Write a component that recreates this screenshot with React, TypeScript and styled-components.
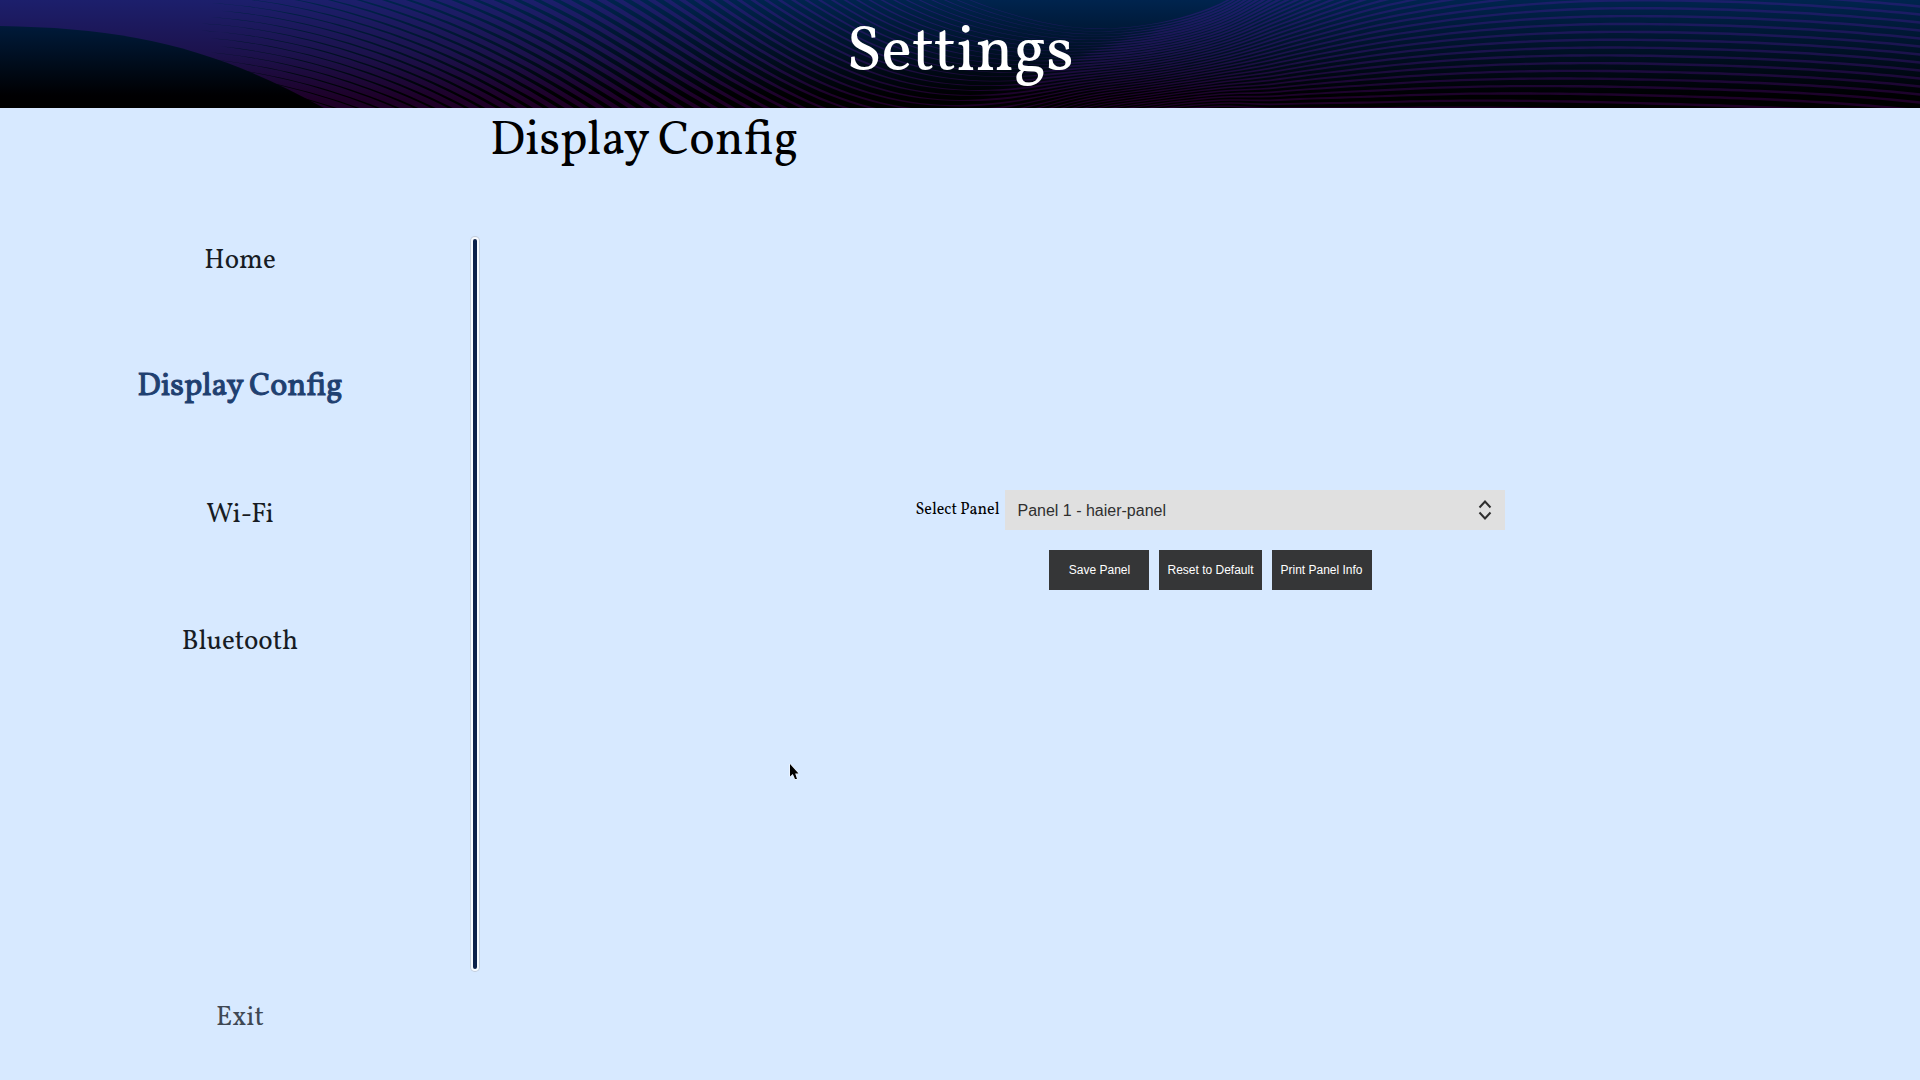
import React, { useState } from "react";
import styled, { createGlobalStyle } from "styled-components";

const serif = `Vollkorn, "Liberation Serif", serif`;
const sans = `"Liberation Sans", Arial, sans-serif`;

const GlobalStyle = createGlobalStyle`
  *, *::before, *::after { box-sizing: border-box; }
  body {
    margin: 0;
    background: #d7e9ff;
    color: #000;
    font-family: ${serif};
  }
`;

/* ---------- header wave artwork ---------- */

type Table = [number, number][];

const slopes: Table = [
  [200, 0.08], [300, 0.24], [400, 0.38], [500, 0.5], [640, 0.62], [750, 0.6],
  [850, 0.46], [950, 0.22], [1040, 0.04], [1100, -0.06], [1180, -0.2],
  [1250, -0.27], [1320, -0.2], [1420, -0.1], [1600, 0], [1750, 0.04], [1920, 0.1],
];
const spacings: Table = [
  [200, 7], [400, 8], [640, 10], [800, 8.5], [900, 6.5], [1000, 4.4],
  [1080, 2.9], [1150, 2.6], [1220, 3], [1280, 4.2], [1400, 6.2], [1600, 7.8], [1920, 8],
];
const fills: Table = [
  [200, 1], [300, 0.88], [400, 0.76], [640, 0.5], [800, 0.32], [950, 0.2],
  [1020, 0.2], [1120, 0.42], [1200, 0.5], [1280, 0.42], [1400, 0.35], [1600, 0.31], [1920, 0.31],
];

function sample(table: Table, x: number) {
  const last = table.length - 1;
  if (x <= table[0][0]) return table[0][1];
  if (x >= table[last][0]) return table[last][1];
  let i = 0;
  while (table[i + 1][0] < x) i += 1;
  const slopeAt = (j: number) => {
    const a = table[Math.max(0, j - 1)];
    const b = table[Math.min(last, j + 1)];
    return (b[1] - a[1]) / (b[0] - a[0]);
  };
  const [x0, y0] = table[i];
  const [x1, y1] = table[i + 1];
  const w = x1 - x0;
  const t = (x - x0) / w;
  const t2 = t * t;
  const t3 = t2 * t;
  return (
    (2 * t3 - 3 * t2 + 1) * y0 +
    (t3 - 2 * t2 + t) * w * slopeAt(i) +
    (3 * t2 - 2 * t3) * y1 +
    (t3 - t2) * w * slopeAt(i + 1)
  );
}

// Share of the gap that a wave line fills: the lines swell below the crest
// that climbs to the top edge, and thin out above it.
function fillAt(x: number, y: number) {
  const base = sample(fills, x);
  if (x <= 900) return base;
  const weight = Math.min(1, (x - 900) / 100);
  const depth = y - (60 - (x - 1080) * 0.4);
  const below = 1 / (1 + Math.exp(-depth / 4));
  const swell = 0.5 * Math.exp(-Math.max(0, depth) / 18);
  const shaped = below * (base + swell) + (1 - below) * 0.12;
  return Math.min(1, base + (shaped - base) * weight);
}

const STEP = 10;
const xs = Array.from({ length: 173 }, (_, i) => 200 + i * STEP);
const pivot = xs.indexOf(1080);

// Index of the wave line that crosses the middle of the band at each x.
const phase: number[] = [];
phase[pivot] = 9;
for (let i = pivot + 1; i < xs.length; i += 1) {
  const x = xs[i] - STEP / 2;
  phase[i] = phase[i - 1] - (sample(slopes, x) / sample(spacings, x)) * STEP;
}
for (let i = pivot - 1; i >= 0; i -= 1) {
  const x = xs[i] + STEP / 2;
  phase[i] = phase[i + 1] + (sample(slopes, x) / sample(spacings, x)) * STEP;
}

function ribbon(k: number) {
  const upper: string[] = [];
  const lower: string[] = [];
  xs.forEach((x, i) => {
    const gap = sample(spacings, x);
    const y = 54 + (k - phase[i]) * gap;
    const h = (fillAt(x, y) * gap) / 2;
    upper.push(`${x} ${(y - h).toFixed(2)}`);
    lower.unshift(`${x} ${(y + h).toFixed(2)}`);
  });
  return `M${upper.join("L")}L${lower.join("L")}Z`;
}

const ribbons = Array.from({ length: 90 }, (_, k) => ribbon(k)).join("");

const Artwork = styled.svg`
  position: absolute;
  inset: 0;
  width: 100%;
  height: 100%;
`;

function HeaderArtwork() {
  return (
    <Artwork viewBox="0 0 1920 108" preserveAspectRatio="none" aria-hidden="true">
      <defs>
        <linearGradient id="violet" gradientUnits="userSpaceOnUse" x1="0" y1="0" x2="0" y2="108">
          <stop offset="0" stopColor="#1c1f6c" />
          <stop offset="0.5" stopColor="#1c124c" />
          <stop offset="0.92" stopColor="#1e0028" />
          <stop offset="1" stopColor="#1e0026" />
        </linearGradient>
        <linearGradient id="navy" gradientUnits="userSpaceOnUse" x1="0" y1="0" x2="0" y2="108">
          <stop offset="0" stopColor="#00244e" />
          <stop offset="0.45" stopColor="#001228" />
          <stop offset="0.88" stopColor="#000002" />
          <stop offset="1" stopColor="#000000" />
        </linearGradient>
      </defs>
      <rect width="1920" height="108" fill="url(#navy)" />
      <rect width="201" height="108" fill="url(#violet)" />
      <path d={ribbons} fill="url(#violet)" />
      <path d="M0 26C130 28 215 48 324 108H0Z" fill="url(#navy)" />
    </Artwork>
  );
}

/* ---------- layout ---------- */

const Page = styled.div`
  display: flex;
  flex-direction: column;
  min-height: 100vh;
`;

const Header = styled.header`
  position: relative;
  display: flex;
  align-items: center;
  justify-content: center;
  height: 108px;
  background: #00122a;
  overflow: hidden;
`;

const PageTitle = styled.h1`
  position: relative;
  margin: 0;
  color: #fff;
  font-size: 64px;
  font-weight: 400;
  line-height: 108px;
`;

const Body = styled.div`
  flex: 1;
  display: grid;
  grid-template-columns: 25% 1fr;
`;

const Sidebar = styled.aside`
  display: flex;
  flex-direction: column;
  justify-content: space-between;
  padding-top: 88px;
`;

const NavList = styled.nav`
  display: flex;
  flex-direction: column;
`;

const NavButton = styled.button<{ $active?: boolean; $muted?: boolean }>`
  height: 127px;
  padding: ${(p) => (p.$active ? "0" : "2px 0 0")};
  border: 0;
  background: none;
  color: ${(p) => (p.$active ? "#1f4070" : p.$muted ? "#3f4854" : "#171c24")};
  font-family: ${serif};
  font-size: ${(p) => (p.$active ? "32px" : "27px")};
  -webkit-text-stroke: ${(p) => (p.$active ? "1px #1f4070" : "0")};
  cursor: pointer;
`;

const Content = styled.main`
  display: flex;
`;

const Divider = styled.div`
  flex: none;
  width: 4px;
  margin: 131px 0 111px -7px;
  border-radius: 4px;
  background: #0b2049;
  box-shadow: 0 0 0 2px #f6faff, 0 0 0 3px #c3cedd;
`;

const Panel = styled.section`
  flex: 1;
  display: grid;
  grid-template-rows: 60px 1fr;
  padding: 0 0 168px 13px;
`;

const SectionTitle = styled.h2`
  margin: 0;
  font-size: 48px;
  font-weight: 400;
  line-height: 68px;
`;

const Form = styled.form`
  display: flex;
  flex-direction: column;
  align-items: center;
  justify-content: center;
  gap: 20px;
  padding-left: 11px;
`;

const Field = styled.div`
  display: flex;
  align-items: center;
  gap: 6px;
`;

const Label = styled.label`
  font-size: 16px;
`;

const SelectBox = styled.div`
  position: relative;
  width: 500px;
`;

const Select = styled.select`
  appearance: none;
  display: block;
  width: 100%;
  height: 40px;
  padding: 0 40px 0 12px;
  border: 0;
  border-radius: 0;
  background: #e0e0e0;
  color: #2f2f2f;
  font-family: ${sans};
  font-size: 16px;
`;

const Chevrons = styled.svg`
  position: absolute;
  top: 10px;
  right: 13px;
  width: 14px;
  height: 20px;
  pointer-events: none;
`;

const Actions = styled.div`
  display: flex;
  gap: 10px;
`;

const ActionButton = styled.button`
  min-width: 100px;
  height: 40px;
  padding: 0 8px;
  border: 0;
  background: #353637;
  color: #fff;
  font-family: ${sans};
  font-size: 12px;
  cursor: pointer;
`;

const Pointer = styled.svg`
  position: absolute;
  left: 789px;
  top: 763px;
  width: 11px;
  height: 18px;
  pointer-events: none;
`;

const sections = ["Home", "Display Config", "Wi-Fi", "Bluetooth"];

export default function App() {
  const [active, setActive] = useState("Display Config");

  return (
    <Page>
      <GlobalStyle />
      <Header>
        <HeaderArtwork />
        <PageTitle>Settings</PageTitle>
      </Header>
      <Body>
        <Sidebar>
          <NavList>
            {sections.map((name) => (
              <NavButton
                key={name}
                type="button"
                $active={name === active}
                onClick={() => setActive(name)}
              >
                {name}
              </NavButton>
            ))}
          </NavList>
          <NavButton type="button" $muted>
            Exit
          </NavButton>
        </Sidebar>
        <Content>
          <Divider />
          <Panel>
            <SectionTitle>{active}</SectionTitle>
            <Form onSubmit={(e) => e.preventDefault()}>
              <Field>
                <Label htmlFor="panel">Select Panel</Label>
                <SelectBox>
                  <Select id="panel" defaultValue="haier-panel">
                    <option value="haier-panel">Panel 1 - haier-panel</option>
                  </Select>
                  <Chevrons viewBox="0 0 14 20" fill="none" stroke="#2f2f2f" strokeWidth="2" aria-hidden="true">
                    <path d="M1.5 7.5L7 1.500l5.500 6M1.500 12.500L7 18.500l5.500-6" />
                  </Chevrons>
                </SelectBox>
              </Field>
              <Actions>
                <ActionButton type="button">Save Panel</ActionButton>
                <ActionButton type="button">Reset to Default</ActionButton>
                <ActionButton type="button">Print Panel Info</ActionButton>
              </Actions>
            </Form>
          </Panel>
        </Content>
      </Body>
      <Pointer viewBox="0 0 11 18" aria-hidden="true">
        <path
          d="M1 1V13.500L3.800 11L6 16H8L6.200 10.500H9.500Z"
          fill="#000"
          stroke="#fff"
          strokeWidth="1"
          paintOrder="stroke"
        />
      </Pointer>
    </Page>
  );
}
